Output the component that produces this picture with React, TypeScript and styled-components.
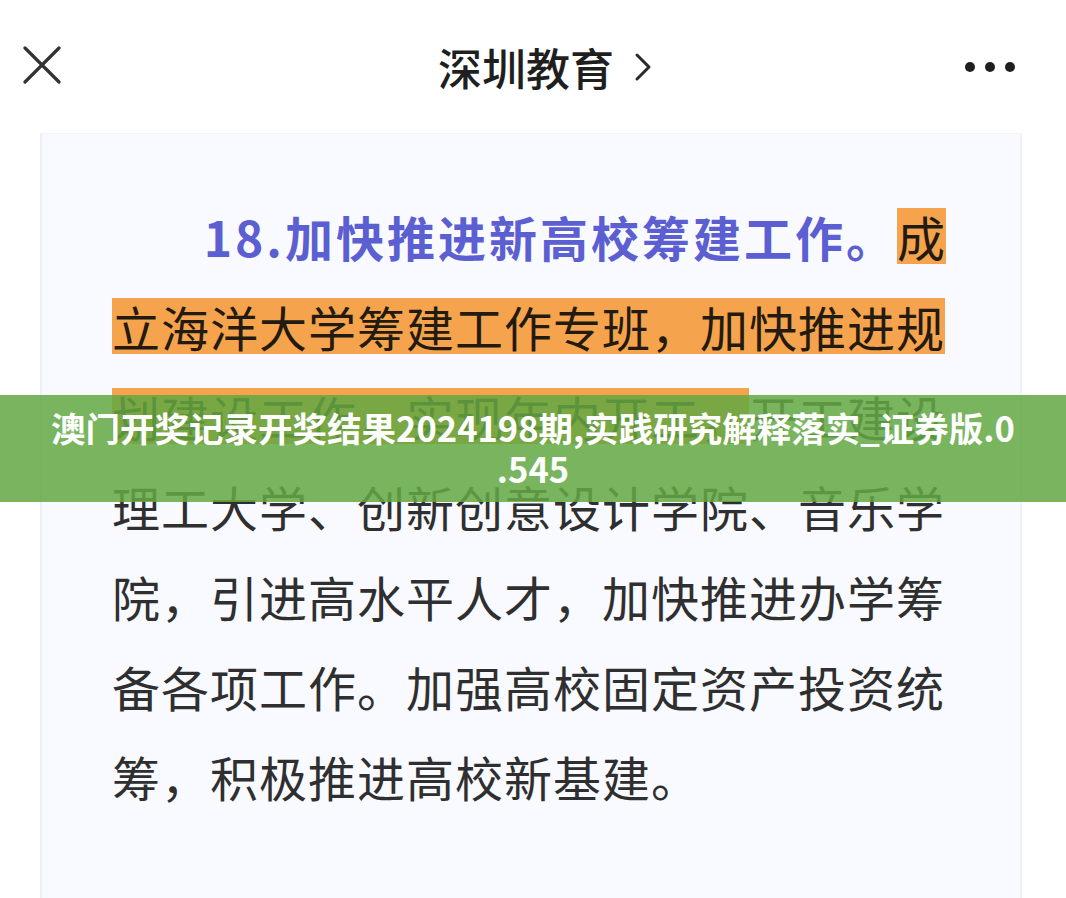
import styled, { createGlobalStyle } from 'styled-components'

const Global = createGlobalStyle`
  html, body {
    margin: 0;
    padding: 0;
    background: #ffffff;
  }
  body {
    font-family: "Noto Sans CJK SC", "Noto Sans", sans-serif;
    overflow: hidden;
  }
`

const Page = styled.div`
  position: relative;
  width: 1066px;
  height: 898px;
  overflow: hidden;
  background: #ffffff;
`

const Header = styled.header`
  height: 133px;
  display: grid;
  grid-template-columns: 120px 1fr 120px;
  align-items: start;
  padding: 0 50px 0 22px;
  box-sizing: border-box;
`

const IconButton = styled.div<{ $right?: boolean }>`
  display: flex;
  justify-content: ${(p) => (p.$right ? 'flex-end' : 'flex-start')};
  padding-top: ${(p) => (p.$right ? '61px' : '46px')};
`

const Title = styled.div`
  display: flex;
  align-items: center;
  justify-content: center;
  gap: 20px;
  padding-top: 38px;
  padding-left: 52px;
  font-size: 44px;
  line-height: 58px;
  font-weight: 500;
  color: #1f1f1f;
`

const Card = styled.section`
  margin: 0 44px 0 40px;
  height: 765px;
  box-sizing: border-box;
  padding: 74px 0 0 70px;
  background: #f8faff;
  border-left: 2px solid #eeeffa;
  border-right: 2px solid #f1f2f9;
  border-top: 1px solid #f3f4fa;
`

const Line = styled.div<{ $align?: 'left' | 'right' }>`
  width: 834px;
  height: 56px;
  margin-bottom: 34px;
  font-size: 48px;
  line-height: 56px;
  letter-spacing: 1px;
  color: #2f2f2f;
  white-space: nowrap;
  text-align: ${(p) => p.$align ?? 'left'};
`

const Lead = styled.span`
  color: #5c5fd1;
  font-weight: 700;
  letter-spacing: 3px;
`

const Mark = styled.span`
  display: inline-block;
  height: 56px;
  line-height: 56px;
  background: #f5a34c;
  color: #231a10;
`

const Banner = styled.div`
  position: absolute;
  left: 0;
  right: 0;
  top: 395px;
  height: 107px;
  box-sizing: border-box;
  padding: 12px 20px 0;
  background: rgba(100, 168, 68, 0.86);
  color: #ffffff;
  font-size: 34.5px;
  line-height: 41px;
  font-weight: 700;
  text-align: center;
  white-space: nowrap;
`

function CloseIcon() {
  return (
    <svg width="40" height="38" viewBox="0 0 40 38">
      <path d="M3 2 L37 36 M37 2 L3 36" stroke="#333" strokeWidth="3.2" strokeLinecap="round" />
    </svg>
  )
}

function Chevron() {
  return (
    <svg width="18" height="30" viewBox="0 0 18 30">
      <path d="M3 3 L15 15 L3 27" stroke="#2a2a2a" strokeWidth="3" fill="none" strokeLinecap="round" strokeLinejoin="round" />
    </svg>
  )
}

function MoreIcon() {
  return (
    <svg width="52" height="12" viewBox="0 0 52 12">
      <circle cx="6" cy="6" r="5" fill="#1f1f1f" />
      <circle cx="26" cy="6" r="5" fill="#1f1f1f" />
      <circle cx="46" cy="6" r="5" fill="#1f1f1f" />
    </svg>
  )
}

export default function App() {
  return (
    <Page>
      <Global />
      <Header>
        <IconButton>
          <CloseIcon />
        </IconButton>
        <Title>
          <span>深圳教育</span>
          <Chevron />
        </Title>
        <IconButton $right>
          <MoreIcon />
        </IconButton>
      </Header>
      <Card>
        <Line $align="right">
          <Lead>18.加快推进新高校筹建工作。</Lead>
          <Mark>成</Mark>
        </Line>
        <Line>
          <Mark>立海洋大学筹建工作专班，加快推进规</Mark>
        </Line>
        <Line>
          <Mark>划建设工作，实现年内开工，</Mark>开工建设
        </Line>
        <Line>理工大学、创新创意设计学院、音乐学</Line>
        <Line>院，引进高水平人才，加快推进办学筹</Line>
        <Line>备各项工作。加强高校固定资产投资统</Line>
        <Line>筹，积极推进高校新基建。</Line>
      </Card>
      <Banner>
        澳门开奖记录开奖结果2024198期,实践研究解释落实_证券版.0
        <br />
        .545
      </Banner>
    </Page>
  )
}
